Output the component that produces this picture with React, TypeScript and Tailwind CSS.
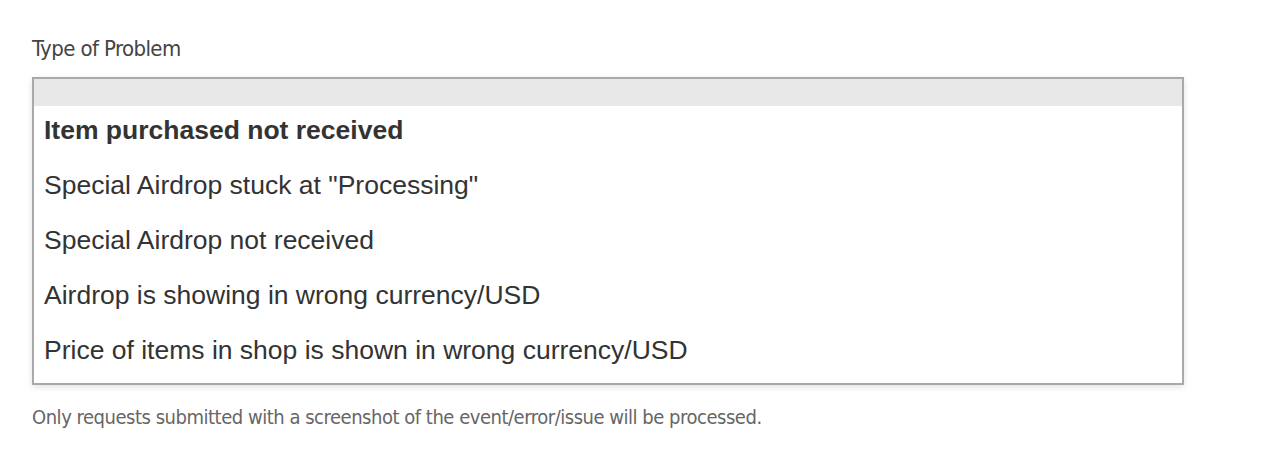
const OPTIONS = [
  'Item purchased not received',
  'Special Airdrop stuck at "Processing"',
  'Special Airdrop not received',
  'Airdrop is showing in wrong currency/USD',
  'Price of items in shop is shown in wrong currency/USD',
]

export default function App() {
  return (
    <div className="min-h-[473px] w-full bg-white pl-8 pr-24 pt-[34px]">
      {/* label */}
      <label className="block text-[22px] leading-[30px] text-[#444] font-['DejaVu_Sans_Condensed',sans-serif] tracking-[-0.6px]">
        Type of Problem
      </label>

      {/* listbox */}
      <div className="mt-[13px] w-[1152px] border-2 border-[#a9a9a9] bg-white shadow-[0_2px_6px_rgba(0,0,0,0.12)] font-['Liberation_Sans',Arial,sans-serif]">
        <div className="h-[27px] bg-[#e8e8e8]" />
        <ul className="pb-[2px]">
          {OPTIONS.map((opt, i) => (
            <li
              key={i}
              className={`h-[55px] pb-[5px] flex items-center px-[10px] text-[26.5px] text-[#333] ${i === 0 ? 'font-bold' : ''}`}
            >
              {opt}
            </li>
          ))}
        </ul>
      </div>

      {/* help text */}
      <p className="mt-[18px] text-[20px] leading-[28px] text-[#666] font-['DejaVu_Sans_Condensed',sans-serif] tracking-[-0.48px]">
        Only requests submitted with a screenshot of the event/error/issue will be processed.
      </p>
    </div>
  )
}
